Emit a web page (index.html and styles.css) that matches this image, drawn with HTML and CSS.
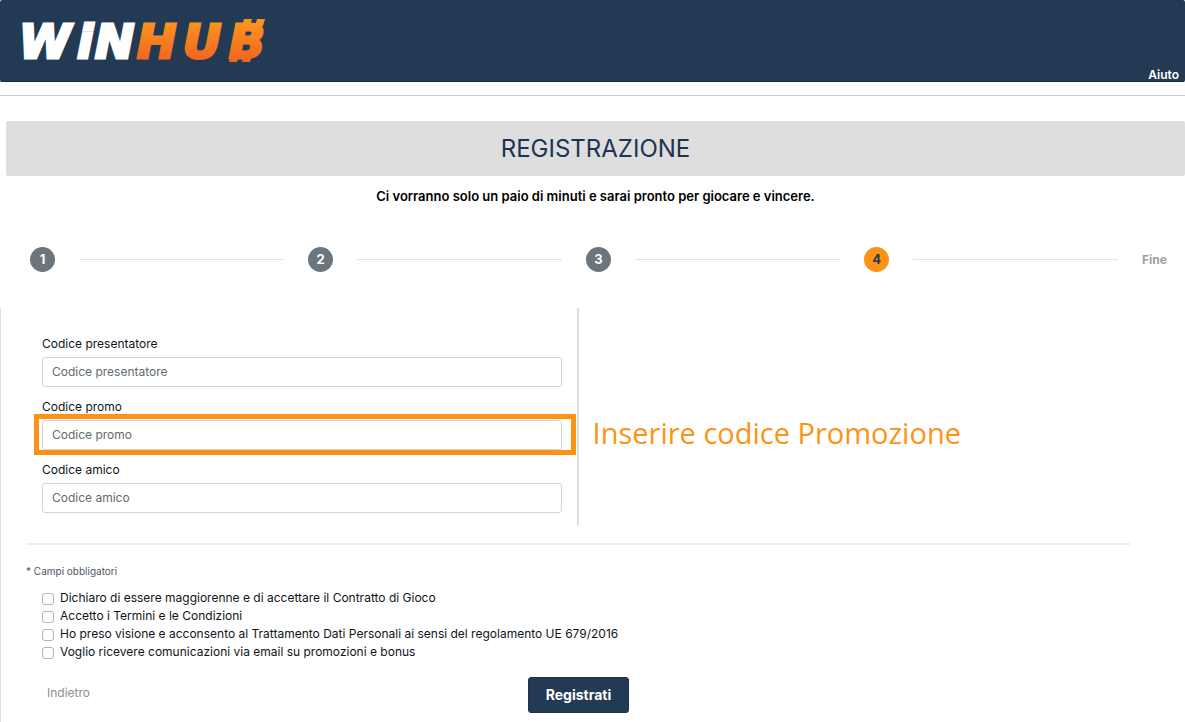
FILE: index.html
```html
<!DOCTYPE html>
<html lang="it">
<head>
<meta charset="utf-8">
<meta name="viewport" content="width=device-width, initial-scale=1">
<title>WinHub - Registrazione</title>
<link rel="stylesheet" href="styles.css">
</head>
<body>
<header class="header">
  <svg class="logo" width="252" height="46" viewBox="0 0 252 46" role="img" aria-label="WinHub">
    <defs>
      <linearGradient id="flame" gradientUnits="userSpaceOnUse" x1="0" y1="0" x2="0" y2="44">
        <stop offset="0.15" stop-color="#f8921f"/>
        <stop offset="1" stop-color="#f26322"/>
      </linearGradient>
    </defs>
    <text class="logo-text" x="-1 57 75" y="40" fill="#fff" stroke="#fff">WiN</text>
    <text class="logo-text" x="117 163 209" y="40" fill="url(#flame)" stroke="url(#flame)">HUB</text>
    <path fill="url(#flame)" d="M224 1h8l-2 7h-8zM237 1h8l-2 7h-8zM211 37h8l-2 7h-8zM224 37h8l-2 7h-8z"/>
  </svg>
  <a class="help" href="#">Aiuto</a>
</header>
<hr class="header-rule">
<main>
  <div class="intro">
    <h1 class="title">REGISTRAZIONE</h1>
    <p class="lead">Ci vorranno solo un paio di minuti e sarai pronto per giocare e vincere.</p>
  </div>
  <div class="steps">
    <span class="step">1</span><span class="step-line"></span>
    <span class="step">2</span><span class="step-line"></span>
    <span class="step">3</span><span class="step-line"></span>
    <span class="step step-current">4</span><span class="step-line"></span>
    <span class="step-end">Fine</span>
  </div>
  <form class="form">
    <div class="columns">
      <div class="fields">
        <div class="field">
          <label for="presentatore">Codice presentatore</label>
          <input class="text-input" id="presentatore" type="text" placeholder="Codice presentatore">
        </div>
        <div class="field">
          <label for="promo">Codice promo</label>
          <div class="highlighted">
            <input class="text-input" id="promo" type="text" placeholder="Codice promo">
            <span class="highlight"></span>
            <span class="callout">Inserire codice Promozione</span>
          </div>
        </div>
        <div class="field">
          <label for="amico">Codice amico</label>
          <input class="text-input" id="amico" type="text" placeholder="Codice amico">
        </div>
      </div>
    </div>
    <hr class="form-rule">
    <p class="required">* Campi obbligatori</p>
    <div class="consents">
      <label class="consent"><input class="check" type="checkbox">Dichiaro di essere maggiorenne e di accettare il Contratto di Gioco</label>
      <label class="consent"><input class="check" type="checkbox">Accetto i Termini e le Condizioni</label>
      <label class="consent"><input class="check" type="checkbox">Ho preso visione e acconsento al Trattamento Dati Personali ai sensi del regolamento UE 679/2016</label>
      <label class="consent"><input class="check" type="checkbox">Voglio ricevere comunicazioni via email su promozioni e bonus</label>
    </div>
    <div class="actions">
      <a class="back" href="#">Indietro</a>
      <button class="submit" type="submit">Registrati</button>
    </div>
  </form>
</main>
</body>
</html>
```
FILE: styles.css
```css
* { box-sizing: border-box; }
body {
  margin: 0;
  min-height: 100vh;
  display: flex;
  flex-direction: column;
  background: #fff;
  color: #111418;
  font: 12px/18px Inter, "Liberation Sans", sans-serif;
}
a { text-decoration: none; }
.header {
  display: flex;
  justify-content: space-between;
  align-items: flex-end;
  padding: 18px 6px 0 20px;
  height: 82px;
  background: #233a54;
  border-bottom: 1px solid #142b45;
  border-radius: 2px;
}
.logo { align-self: flex-start; overflow: visible; }
.logo-text { font: italic bold 47px "DejaVu Sans", sans-serif; stroke-width: 3px; }
.help { color: #fff; font-weight: 600; line-height: 12px; }
.header-rule {
  width: 100%;
  margin: 13px 0 25px;
  border: 0;
  border-top: 1px solid #ccc;
}
main { flex: 1; display: flex; flex-direction: column; }
.intro { padding-left: 6px; text-align: center; }
.title {
  margin: 0;
  padding: 12px;
  background: #dedede;
  border-radius: 2px;
  color: #1d3552;
  font-size: 24px;
  line-height: 31px;
  font-weight: 400;
}
.lead { margin: 11px 0 0; color: #000; font-size: 13px; font-weight: 600; }
.steps {
  display: flex;
  align-items: center;
  gap: 24px;
  padding: 42px 18px 36px 30px;
  font-weight: 700;
}
.step {
  width: 25px;
  height: 25px;
  border-radius: 50%;
  background: #6b757e;
  color: #fff;
  font-size: 13px;
  line-height: 25px;
  text-align: center;
}
.step-current { background: #fc9315; color: #233a54; }
.step-line { flex: 1; height: 1px; background: #e3e3e3; }
.step-end { color: #9ba1a7; }
.form { flex: 1; border-left: 1px solid #ddd; }
.columns { display: grid; grid-template-columns: 20fr 21fr; }
.fields {
  display: flex;
  flex-direction: column;
  gap: 11px;
  padding: 27px 15px 12px 41px;
  border-right: 2px solid #dcdcde;
}
.field { display: flex; flex-direction: column; gap: 4px; }
.text-input {
  display: block;
  width: 100%;
  height: 30px;
  padding: 0 9px 2px;
  border: 1px solid #ced4da;
  border-radius: 3px;
  background: #fff;
  color: #495057;
  font: inherit;
}
.text-input::placeholder { color: #626a71; opacity: 1; }
.highlighted { position: relative; }
.highlight {
  position: absolute;
  inset: -6px -14px -5px -8px;
  border: 5px solid #fc9315;
  pointer-events: none;
}
.callout {
  position: absolute;
  top: -7px;
  left: calc(100% + 31px);
  color: #fc9315;
  font: 400 29px/40px "Open Sans", "Noto Sans", sans-serif;
  white-space: nowrap;
}
.form-rule {
  margin: 18px 55px 0 26px;
  border: 0;
  border-top: 2px solid #ededed;
}
.required {
  margin: 17px 25px 0;
  color: #50565c;
  font-size: 10px;
}
.consents {
  display: flex;
  flex-direction: column;
  padding: 9px 41px 0;
}
.consent { display: flex; align-items: center; gap: 6px; }
.check {
  appearance: none;
  flex: none;
  width: 12px;
  height: 12px;
  margin: 2px 0 0;
  border: 1px solid #b4b8bc;
  border-radius: 3px;
  background: #fff;
}
.actions {
  display: grid;
  grid-template-columns: 1fr auto 1fr;
  padding: 16px 75px 10px 46px;
}
.back { color: #8b8f93; line-height: 32px; }
.submit {
  padding: 0 17px;
  height: 36px;
  border: 1px solid #1b3350;
  border-radius: 3px;
  background: #233a54;
  color: #fff;
  font: 700 14px/34px Inter, "Liberation Sans", sans-serif;
}
```
